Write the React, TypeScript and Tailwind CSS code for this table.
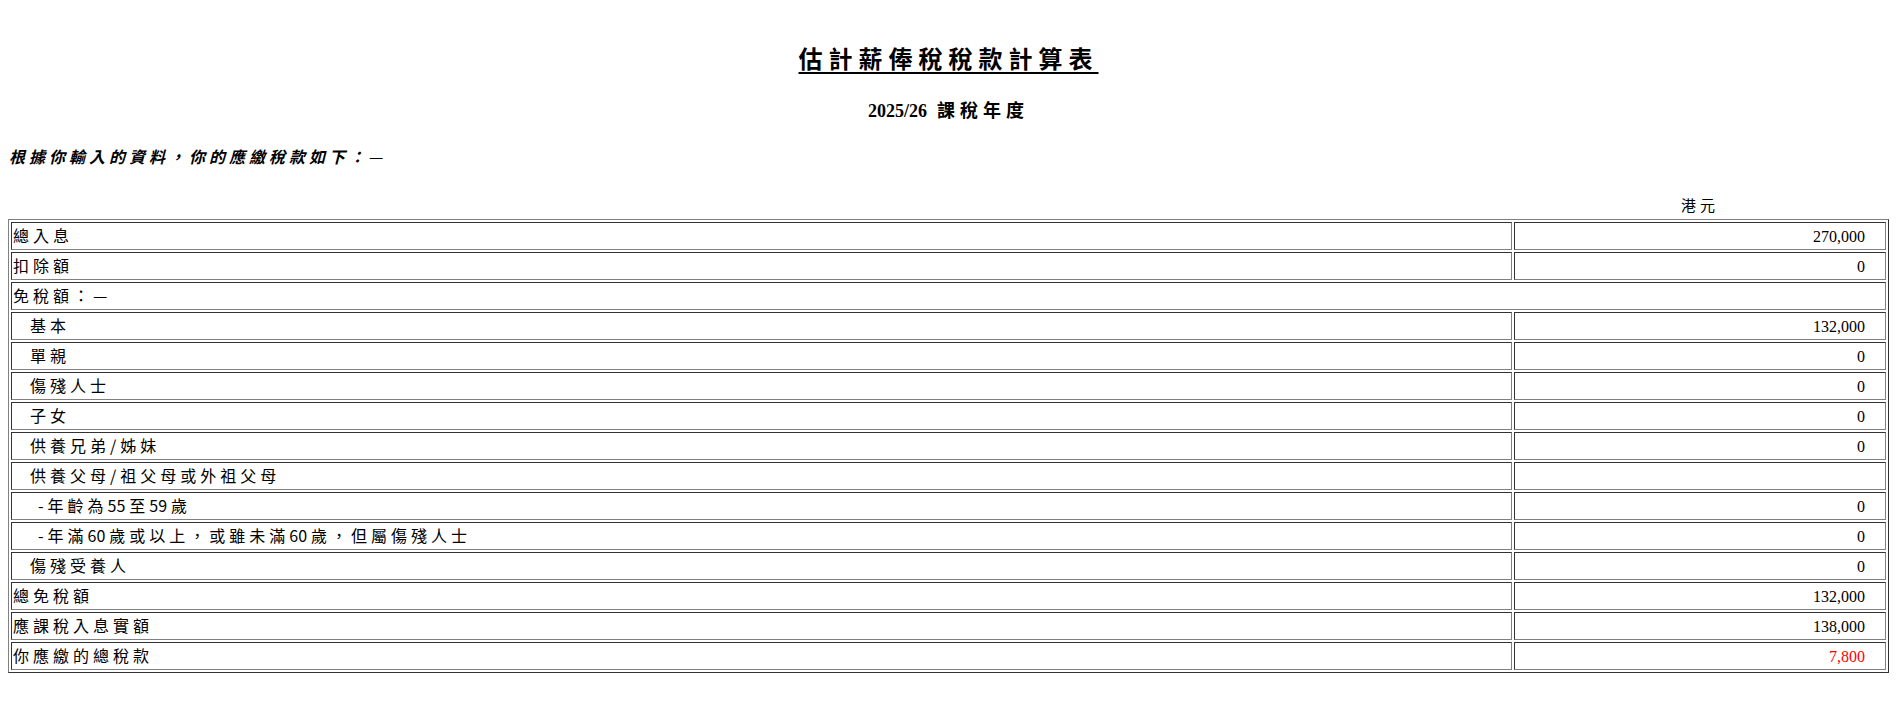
import React from "react";

type Row = {
  label: React.ReactNode;
  value?: string;
  indent?: number;
  span?: boolean;
  red?: boolean;
};

const n = (d: string) => <span className="tracking-[0px] mr-[4px]">{d}</span>;

const rows: Row[] = [
  { label: "總入息", value: "270,000" },
  { label: "扣除額", value: "0" },
  { label: "免稅額：—", span: true },
  { label: "基本", value: "132,000", indent: 1 },
  { label: "單親", value: "0", indent: 1 },
  { label: "傷殘人士", value: "0", indent: 1 },
  { label: "子女", value: "0", indent: 1 },
  { label: "供養兄弟/姊妹", value: "0", indent: 1 },
  { label: "供養父母/祖父母或外祖父母", value: "", indent: 1 },
  { label: <>-年齡為{n("55")}至{n("59")}歲</>, value: "0", indent: 2 },
  {
    label: <>-年滿{n("60")}歲或以上，或雖未滿{n("60")}歲，但屬傷殘人士</>,
    value: "0",
    indent: 2,
  },
  { label: "傷殘受養人", value: "0", indent: 1 },
  { label: "總免稅額", value: "132,000" },
  { label: "應課稅入息實額", value: "138,000" },
  { label: "你應繳的總稅款", value: "7,800", red: true },
];

const cjk = "font-['Noto_Sans_CJK_TC','Noto_Sans',sans-serif]";
const cell =
  "h-[28px] border border-t-[#333] border-l-[#333] border-r-[#808080] border-b-[#808080] px-px py-0 align-middle";

function App(): JSX.Element {
  return (
    <main className="min-h-[708px] bg-white px-2 text-black">
      <h1 className={`pt-[42px] text-center text-[24px] leading-[32px] font-bold ${cjk}`}>
        <span className="underline underline-offset-[4px] decoration-2 tracking-[6px]">
          估計薪俸稅稅款計算表
        </span>
      </h1>
      <h2 className="mt-[23px] text-center text-[18px] leading-[24px] font-bold">
        <span className="font-['Liberation_Serif',serif]">2025/26</span>
        <span className={`${cjk} ml-[10px] tracking-[5px]`}>課稅年度</span>
      </h2>
      <p className={`mt-[21px] pl-px text-[16px] leading-[24px] font-bold italic tracking-[4px] ${cjk}`}>
        根據你輸入的資料，你的應繳稅款如下：<span className="font-normal not-italic tracking-normal">—</span>
      </p>
      <div className="mt-[27px] flex">
        <div className="flex-1" />
        <div className={`w-[372px] mr-[3px] text-center text-[15px] leading-[20px] tracking-[4px] ${cjk}`}>
          港元
        </div>
      </div>
      <table className="mt-[4px] w-full border-separate border-spacing-[2px] border border-t-[#808080] border-l-[#808080] border-r-[#333] border-b-[#333]">
        <tbody>
          {rows.map((r, i) => (
            <tr key={i}>
              <td colSpan={r.span ? 2 : 1} className={cell}>
                <span
                  className={`${cjk} text-[16px] leading-[20px] tracking-[4px] ${
                    r.indent === 1 ? "pl-[17px]" : r.indent === 2 ? "pl-[25px]" : ""
                  }`}
                >
                  {r.label}
                </span>
              </td>
              {!r.span && (
                <td className={`${cell} w-[372px] pr-[20px] text-right`}>
                  <span
                    className={`font-['Liberation_Serif',serif] text-[16px] leading-[20px] ${
                      r.red ? "text-[#ff0000]" : ""
                    }`}
                  >
                    {r.value}
                  </span>
                </td>
              )}
            </tr>
          ))}
        </tbody>
      </table>
    </main>
  );
}

export default App;
